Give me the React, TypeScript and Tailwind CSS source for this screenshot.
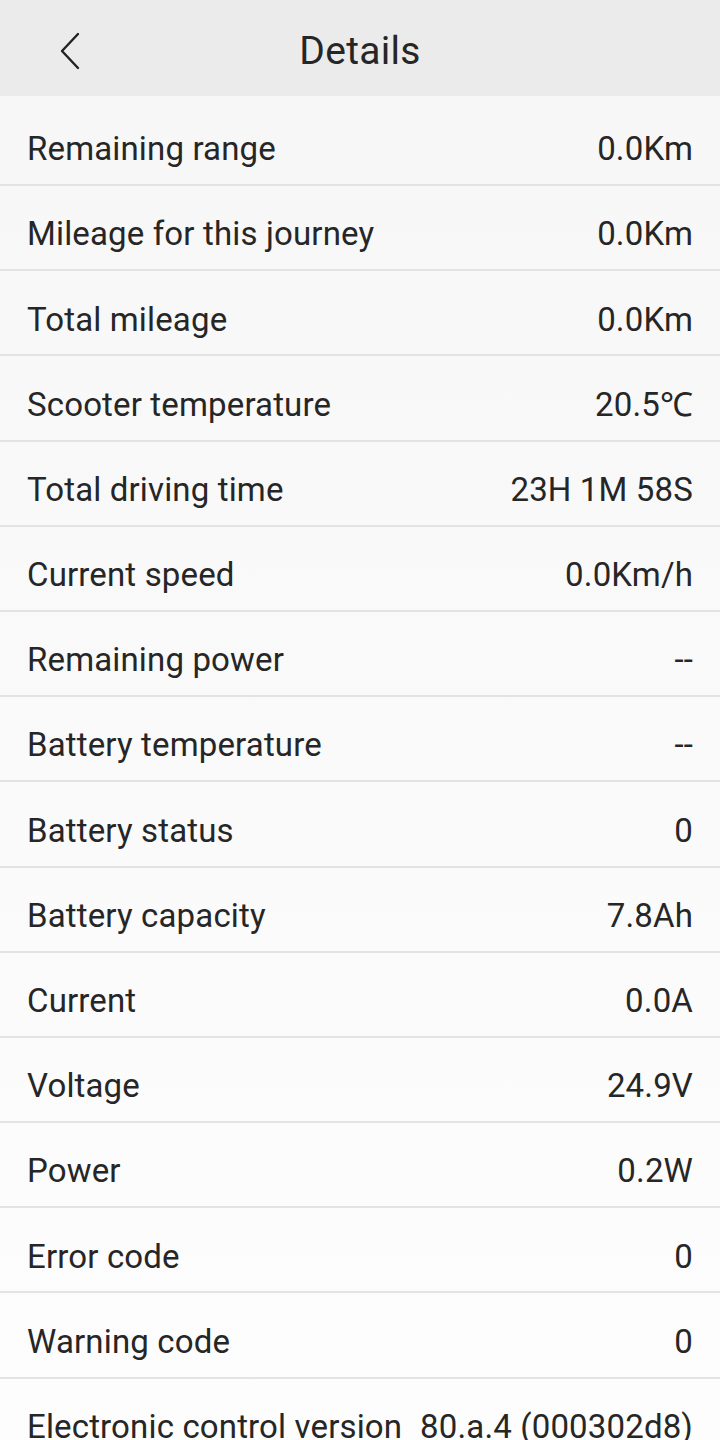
import React from "react";

const rows: [string, string][] = [
  ["Remaining range", "0.0Km"],
  ["Mileage for this journey", "0.0Km"],
  ["Total mileage", "0.0Km"],
  ["Scooter temperature", "20.5℃"],
  ["Total driving time", "23H 1M 58S"],
  ["Current speed", "0.0Km/h"],
  ["Remaining power", "--"],
  ["Battery temperature", "--"],
  ["Battery status", "0"],
  ["Battery capacity", "7.8Ah"],
  ["Current", "0.0A"],
  ["Voltage", "24.9V"],
  ["Power", "0.2W"],
  ["Error code", "0"],
  ["Warning code", "0"],
  ["Electronic control version", "80.a.4 (000302d8)"],
];

export default function App() {
  return (
    <div
      className="w-[720px] h-[1440px] overflow-hidden flex flex-col text-[#262626]"
      style={{ fontFamily: "Roboto, 'Noto Sans', sans-serif" }}
    >
      <div className="h-[96px] shrink-0 bg-[#ebebeb] flex items-center relative">
        <div className="w-[140px] pl-[56px] pt-[4px] flex items-center">
          <svg width="26" height="40" viewBox="0 0 26 40" fill="none">
            <path d="M22 4 L6 21 L22 38" stroke="#222" strokeWidth="2.4" strokeLinecap="round" strokeLinejoin="round" />
          </svg>
        </div>
        <div className="absolute left-0 right-0 top-0 h-[96px] flex items-center justify-center text-[39px] tracking-[0.3px] pt-[6px] pointer-events-none">
          Details
        </div>
      </div>
      <div className="flex-1 flex flex-col bg-gradient-to-b from-[#f7f7f7] to-[#fdfdfd]">
        {rows.map(([label, value], i) => (
          <div
            key={label}
            className={`${i === 0 ? "h-[90px] pt-[17px]" : "h-[85.2px] pt-[13px]"} shrink-0 flex items-center justify-between px-[27px] border-b-2 border-[#e3e3e3] text-[33px] tracking-[0.15px]`}
          >
            <span>{label}</span>
            <span>{value}</span>
          </div>
        ))}
      </div>
    </div>
  );
}
